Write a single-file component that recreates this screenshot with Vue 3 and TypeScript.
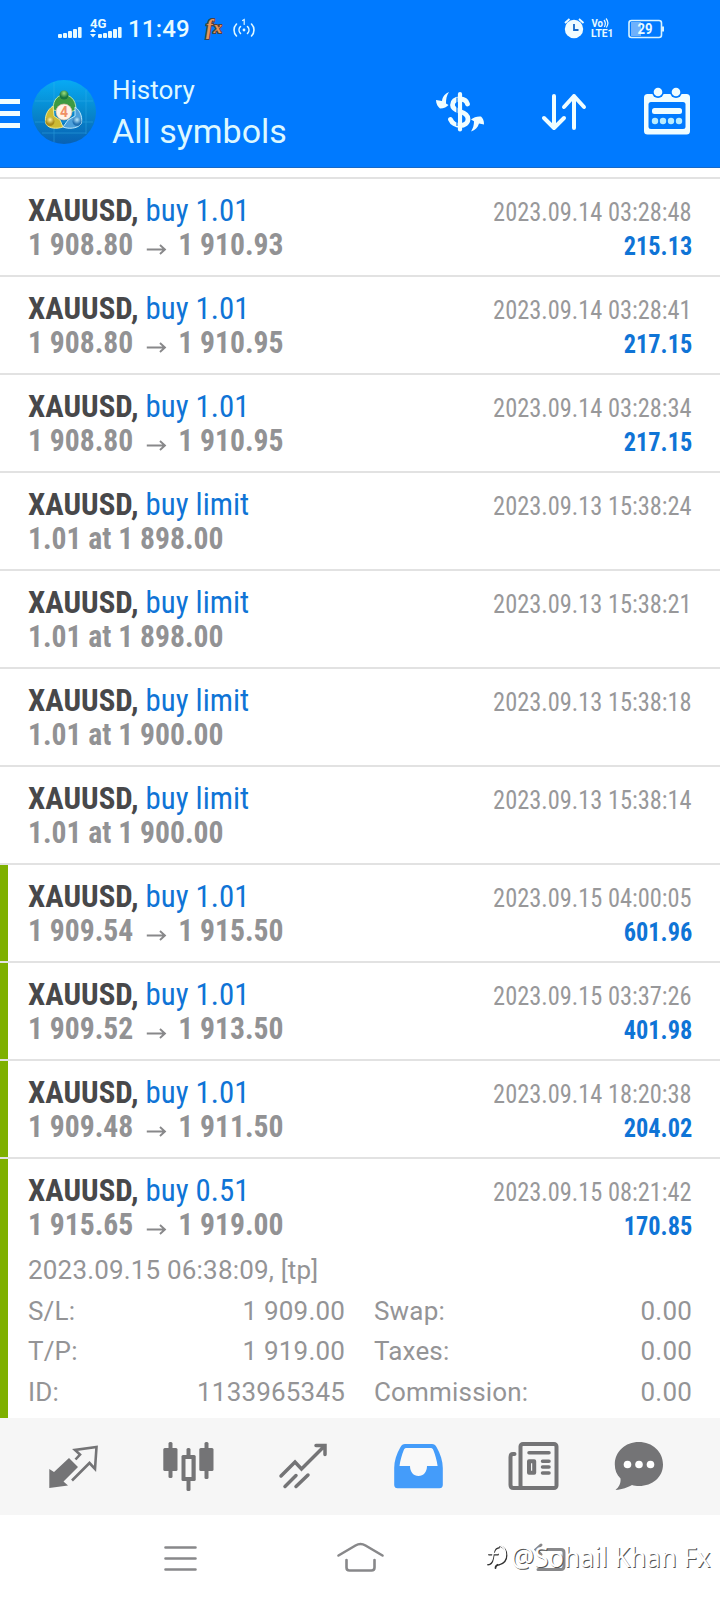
<script setup lang="ts">
interface Deal {
  action: string
  detail: string
  to?: string
  time: string
  profit?: string
  marked?: boolean
  open?: boolean
}

const deals: Deal[] = [
  { action: 'buy 1.01', detail: '1 908.80', to: '1 910.93', time: '2023.09.14 03:28:48', profit: '215.13' },
  { action: 'buy 1.01', detail: '1 908.80', to: '1 910.95', time: '2023.09.14 03:28:41', profit: '217.15' },
  { action: 'buy 1.01', detail: '1 908.80', to: '1 910.95', time: '2023.09.14 03:28:34', profit: '217.15' },
  { action: 'buy limit', detail: '1.01 at 1 898.00', time: '2023.09.13 15:38:24' },
  { action: 'buy limit', detail: '1.01 at 1 898.00', time: '2023.09.13 15:38:21' },
  { action: 'buy limit', detail: '1.01 at 1 900.00', time: '2023.09.13 15:38:18' },
  { action: 'buy limit', detail: '1.01 at 1 900.00', time: '2023.09.13 15:38:14' },
  { action: 'buy 1.01', detail: '1 909.54', to: '1 915.50', time: '2023.09.15 04:00:05', profit: '601.96', marked: true },
  { action: 'buy 1.01', detail: '1 909.52', to: '1 913.50', time: '2023.09.15 03:37:26', profit: '401.98', marked: true },
  { action: 'buy 1.01', detail: '1 909.48', to: '1 911.50', time: '2023.09.14 18:20:38', profit: '204.02', marked: true },
  { action: 'buy 0.51', detail: '1 915.65', to: '1 919.00', time: '2023.09.15 08:21:42', profit: '170.85', marked: true, open: true },
]

const extra = [
  ['S/L:', '1 909.00', 'Swap:', '0.00'],
  ['T/P:', '1 919.00', 'Taxes:', '0.00'],
  ['ID:', '1133965345', 'Commission:', '0.00'],
]
</script>

<template>
  <div class="screen">
    <header class="top">
      <div class="status">
        <svg class="signal" width="68" height="26" viewBox="56 14 68 26">
          <g fill="#e8fbff">
            <rect x="58" y="34" width="4" height="4" rx="1" /><rect x="63" y="33" width="4" height="5" rx="1" />
            <rect x="68" y="31" width="4" height="7" rx="1" /><rect x="73" y="29" width="4" height="9" rx="1" />
            <rect x="78" y="27" width="3.6" height="11" rx="1" />
            <path d="M90 32l3-3.6 3 3.6zM90 34l3 3.6 3-3.6z" />
            <rect x="98" y="34" width="4" height="4" rx="1" /><rect x="103" y="33" width="4" height="5" rx="1" />
            <rect x="108" y="31" width="4" height="7" rx="1" /><rect x="113" y="29" width="4" height="9" rx="1" />
            <rect x="118" y="27" width="3.6" height="11" rx="1" />
          </g>
          <text x="90" y="27.5" class="net" textLength="16.5" lengthAdjust="spacingAndGlyphs">4G</text>
        </svg>
        <span class="clock">11:49</span>
        <svg class="fx" width="22" height="24" viewBox="203 16 22 24">
          <text x="206" y="34" class="fxt">f</text><text x="213.500" y="33" class="fxt fxx">x</text>
        </svg>
        <svg class="hotspot" width="24" height="24" viewBox="232 16 24 24" fill="none" stroke="#e0f8ff" stroke-width="1.6" stroke-linecap="round">
          <path d="M236.500 24a8.500 8.500 0 0 0 0 12M240.500 26.500a5 5 0 0 0 0 7M251.500 24a8.500 8.500 0 0 1 0 12M247.500 26.500a5 5 0 0 1 0 7" />
          <circle cx="244" cy="30" r="1.4" fill="#e0f8ff" stroke="none" /><path d="M242.600 20.500l1.600-1v5" stroke-width="1.2" />
        </svg>
        <svg class="right-status" width="102" height="26" viewBox="563 14 102 26">
          <circle cx="574" cy="29" r="9.2" fill="#f0fcff" />
          <path d="M565 23l4.500-4M579 19l4.500 4" stroke="#f0fcff" stroke-width="1.8" />
          <path d="M574 24v6h4.500" fill="none" stroke="#1769c8" stroke-width="1.8" />
          <text x="591.500" y="27" class="vo" textLength="11.500" lengthAdjust="spacingAndGlyphs">Vo</text>
          <path d="M604 20q2.500 3 .4 7M606 18.500q3.500 4 .4 9" fill="none" stroke="#e8fbff" stroke-width="1.2" />
          <text x="591" y="37" class="vo" textLength="22.500" lengthAdjust="spacingAndGlyphs">LTE1</text>
          <rect x="631" y="22" width="10" height="14" fill="#6fb1fb" />
          <rect x="629" y="20.500" width="32.500" height="17" rx="2.500" fill="none" stroke="#d8f3ff" stroke-width="1.6" />
          <path d="M663 26.500v5" stroke="#d8f3ff" stroke-width="2" />
          <text x="637.500" y="34" class="pct" textLength="15" lengthAdjust="spacingAndGlyphs">29</text>
        </svg>
      </div>
      <div class="bar">
        <div class="menu"><i /><i /><i /></div>
        <svg class="logo" width="64" height="64" viewBox="0 0 64 64">
          <defs>
            <linearGradient id="disc" x1="0" y1="0" x2="0" y2="1"><stop offset="0" stop-color="#08aaf4" /><stop offset=".5" stop-color="#0788cd" /><stop offset="1" stop-color="#0861b4" /></linearGradient>
            <radialGradient id="gr" cy=".3"><stop offset="0" stop-color="#9ee07a" /><stop offset="1" stop-color="#167542" /></radialGradient>
            <radialGradient id="ye" cy=".3"><stop offset="0" stop-color="#fff6a0" /><stop offset="1" stop-color="#a88a1c" /></radialGradient>
            <radialGradient id="bl" cy=".3"><stop offset="0" stop-color="#b8e8ff" /><stop offset="1" stop-color="#2272b4" /></radialGradient>
          </defs>
          <circle cx="32" cy="32" r="32" fill="url(#disc)" />
          <path d="M22 2v60M54 10v44M3 21h58M3 42h58M10 53h44" stroke="#3cb4ec" stroke-width=".8" opacity=".5" />
          <path d="M21 30C21 18 27 15 32 15s12 3 12 15l-6 2-6-7-5 6z" fill="#3d9a42" stroke="#c4ecaa" stroke-width=".9" />
          <path d="M21 26c-6 4-9 11-7 18 3 5 11 5 17 3l-3-7-6-4z" fill="#cdbb35" stroke="#f4ee9b" stroke-width=".9" />
          <path d="M43 27c6 4 8 12 6 17-4 5-13 5-18 3l5-7 7-4z" fill="#4da0da" stroke="#c9efff" stroke-width=".9" />
          <circle cx="32" cy="15" r="4.500" fill="url(#gr)" />
          <circle cx="18" cy="41.500" r="4.500" fill="url(#ye)" /><circle cx="45" cy="41.500" r="4.500" fill="url(#bl)" />
          <circle cx="32" cy="32" r="8" fill="#fff3e8" stroke="#d9b89b" stroke-width=".7" />
          <text x="32" y="37" text-anchor="middle" class="four">4</text>
        </svg>
        <div class="titles"><span class="t1">History</span><span class="t2">All symbols</span></div>
        <svg class="act dollar" width="50" height="44" viewBox="435 90 50 44">
          <g fill="none" stroke="#f0fdff" stroke-linecap="round">
            <path d="M460 94v35.500" stroke-width="4.200" />
            <path d="M467.500 104C466.500 100.500 463.500 99 460 99c-5 0-7.500 2.500-7.500 6s3 5 7.500 6.500c5 1.500 8 3.500 8 7.500s-3.500 6.500-8 6.500c-4 0-8-2.500-9.500-6" stroke-width="4.800" />
          </g>
          <path d="M457 97.500v28.500" stroke="#007aff" stroke-width="1.200" />
          <path d="M449 92c-4 1.500-6.500 5-7 9l-6-1c0 4 2 7 4 8.500 4-.2 7-1.500 8.500-3.500l-2.500-1.500c0-4 .5-8 3-11.500z" fill="#f0fdff" />
          <path d="M471 131.500c4-1.500 7-4 8-8l5 1c0-4-1-6-3-8-4-.3-7 .5-10 3l3 1.800c0 4-1 7-3 10.200z" fill="#f0fdff" />
        </svg>
        <svg class="act sort" width="50" height="44" viewBox="539 90 50 44" fill="none" stroke="#f0fdff" stroke-width="4" stroke-linecap="round" stroke-linejoin="round">
          <path d="M554 96v32M544 118l10 10 10-10M574 128V96M564 107l10-11 10 11" />
        </svg>
        <svg class="act cal" width="50" height="50" viewBox="642 86 50 50">
          <rect x="644" y="94" width="46" height="40.500" rx="3.500" fill="#f0fdff" />
          <rect x="648.500" y="102" width="37" height="27" rx="2.500" fill="#007aff" />
          <circle cx="658" cy="92" r="6" fill="#007aff" /><circle cx="676" cy="92" r="6" fill="#007aff" />
          <circle cx="658" cy="92" r="4.300" fill="#f0fdff" /><circle cx="676" cy="92" r="4.300" fill="#f0fdff" />
          <rect x="652" y="108" width="30" height="6" rx="2.500" fill="#f0fdff" />
          <g fill="#b8ecff"><circle cx="655" cy="121" r="3.200" /><circle cx="663" cy="121" r="3.200" /><circle cx="671" cy="121" r="3.200" /><circle cx="679" cy="121" r="3.200" /></g>
        </svg>
      </div>
    </header>

    <main class="list">
      <article v-for="(d, i) in deals" :key="i" class="deal" :class="{ marked: d.marked, open: d.open }">
        <div class="line">
          <div class="cond left"><b>XAUUSD,</b> <span class="action">{{ d.action }}</span></div>
          <div class="cond right time">{{ d.time }}</div>
        </div>
        <div class="line">
          <div class="cond left price">
            <span>{{ d.detail }}</span>
            <template v-if="d.to">
              <svg class="arrow" width="21.500" height="12" viewBox="0 0 20 12" preserveAspectRatio="none" fill="none" stroke="#88888a" stroke-width="1.900"><path d="M0 6.500h18.500M13.500 2L18.500 6.500l-5 4.500" /></svg>
              <span>{{ d.to }}</span>
            </template>
          </div>
          <div v-if="d.profit" class="cond right profit">{{ d.profit }}</div>
        </div>
        <div v-if="d.open" class="extra">
          <div class="closed">2023.09.15 06:38:09, [tp]</div>
          <div v-for="row in extra" :key="row[0]" class="pair">
            <span>{{ row[0] }}</span><span class="num">{{ row[1] }}</span>
            <span class="second">{{ row[2] }}</span><span class="num">{{ row[3] }}</span>
          </div>
        </div>
      </article>
    </main>

    <nav class="tabs">
      <svg width="52" height="52" viewBox="47 1440 52 52">
        <path d="M49.300 1469l4.700 3 15-14 9 9-14.500 14.500 4.500 4-18.700 2.500z" fill="#747476" />
        <path d="M75.500 1459.500l4.500-5-5-4.500 21.500-3-1.500 22-5.500-6L72 1480.500" fill="none" stroke="#747476" stroke-width="2.600" />
      </svg>
      <svg width="52" height="52" viewBox="162 1440 52 52">
        <g fill="#747476">
          <rect x="163.300" y="1448" width="14.200" height="23" rx="1.500" /><rect x="168.500" y="1442" width="4" height="36" rx="1.500" />
          <rect x="199.300" y="1448" width="14.200" height="23" rx="1.500" /><rect x="204.500" y="1442" width="4" height="37" rx="1.500" />
          <rect x="181.500" y="1455" width="14.200" height="26" rx="1.500" /><rect x="186.500" y="1448" width="4" height="43" rx="1.500" />
        </g>
        <rect x="185.500" y="1459" width="6" height="18" fill="#f6f6f6" />
      </svg>
      <svg width="52" height="52" viewBox="277 1440 52 52" fill="none" stroke="#747476" stroke-width="3.500" stroke-linecap="round">
        <path d="M281 1476l14-14 6.500 7 23-23M316 1445.500h9v9M285 1486.500l11-11M296 1486.500l12-11.500" />
      </svg>
      <svg width="52" height="52" viewBox="392 1440 52 52">
        <path d="M405 1444h27c2 0 3.500 1 4.500 3 4 7 6.300 14 6.300 21v17c0 2-1.300 3.300-3.300 3.300h-42c-2 0-3.300-1.300-3.300-3.300v-17c0-7 2.300-14 6.300-21 1-2 2.500-3 4.500-3z" fill="#449cfa" />
        <path d="M407 1448h23c2 0 2.700.5 3.300 2 2 5 3.500 10 4.300 16H427c0 6-3.500 10-8.500 10s-8.500-4-8.500-10h-10.500c.8-6 2.300-11 4.300-16 .6-1.500 1.300-2 3.200-2z" fill="#f9f9f9" />
      </svg>
      <svg width="52" height="52" viewBox="507 1440 52 52" fill="none" stroke="#747476" stroke-width="4" stroke-linecap="round">
        <rect x="520.500" y="1444" width="36" height="44" rx="2.500" />
        <path d="M514.500 1454H513q-2.500 0-2.500 3v28q0 3 3 3h9" />
        <path d="M529 1452.800h20M542.500 1461.200h6.500M542.500 1467h6.500M542.500 1473h6.500" stroke-width="3.500" />
        <rect x="529" y="1461.300" width="5.200" height="11.500" stroke-linejoin="round" />
      </svg>
      <svg class="chat" width="52" height="52" viewBox="613 1440 52 52">
        <path d="M638.800 1442c13.500 0 24.200 9.500 24.200 22.500 0 12.500-10.500 21.500-24 21.500-2.500 0-5-.4-7-1-5 2.500-9 4.500-16.500 5 3.500-3 5.500-6.500 5-11.500-3.800-3.700-5.700-8.500-5.700-14 0-13 10.500-22.500 24-22.500z" fill="#747476" />
        <g fill="#fff"><circle cx="627.500" cy="1464.500" r="3.800" /><circle cx="639" cy="1464.500" r="3.800" /><circle cx="650.500" cy="1464.500" r="3.800" /></g>
      </svg>
    </nav>

    <footer class="system">
      <svg width="34" height="32" viewBox="163 1542 34 32" stroke="#88888a" stroke-width="2.600" stroke-linecap="round"><path d="M165.500 1547.500h30M165.500 1558.500h30M165.500 1569.500h30" /></svg>
      <svg width="50" height="34" viewBox="336 1540 50 34" fill="none" stroke="#88888a" stroke-width="2.600" stroke-linecap="round" stroke-linejoin="round"><path d="M338.500 1555.500l17-10q5-3 10 0l17 10M346.500 1560v7.500q0 3 3 3h22q3 0 3-3V1560" /></svg>
      <svg width="34" height="32" viewBox="533 1542 34 32" fill="none" stroke="#88888a" stroke-width="3" stroke-linecap="round"><path d="M537 1549.500h24q3 0 3 3v13.500q0 3.500-3 3.500h-23M541 1545l-5 4.500 5 5" /></svg>
      <div class="watermark">
        <svg width="26" height="30" viewBox="485 1545 26 30" fill="none" stroke-linecap="round">
          <path d="M500 1549q6.500 2 6.500 9.500 0 7-7 9-4 .500-4 3.500M488 1567.500q4 0 5-6l1-6q1-4.500 5-5M489 1557.500h9" stroke="#333" stroke-width="1.800" />
          <path d="M499 1548q6.500 2 6.500 9.500 0 7-7 9M487.500 1566.500q4 0 5-6l1-6q1-4.500 5-5M488.500 1556.500h9" stroke="#fff" stroke-width="1.500" />
        </svg>
        <span>@Sohail Khan Fx</span>
      </div>
    </footer>
  </div>
</template>

<style>
body { margin: 0; background: #fff; }
</style>

<style scoped>
.screen { width: 720px; height: 1600px; overflow: hidden; background: #fff; font-family: Roboto, "Liberation Sans", sans-serif; display: flex; flex-direction: column; }
svg { display: block; flex: none; }
.top { box-sizing: border-box; height: 168px; background: #007aff; border-bottom: 1px solid #1769c8; flex: none; }
.status { height: 56px; box-sizing: border-box; padding: 0 0 0 56px; display: flex; align-items: flex-start; }
.signal { margin-top: 14px; }
.clock { flex: none; width: 62px; margin: 13px 0 0 4px; font-size: 24px; line-height: 32px; font-weight: 500; letter-spacing: .2px; color: #e8fbff; white-space: nowrap; }
.fx { margin: 16px 0 0 13px; }
.hotspot { margin: 16px 0 0 7px; }
.right-status { margin: 14px 0 0 307px; }
.net { font: 700 12.500px Roboto, sans-serif; fill: #e8fbff; }
.vo { font: 700 11px Roboto, sans-serif; fill: #e8fbff; }
.pct { font: 700 14px Roboto, sans-serif; fill: #e8fbff; }
.fxt { font: italic 700 20px "Liberation Serif", serif; fill: #e8965a; stroke: #4b4140; stroke-width: 2.200px; paint-order: stroke; }
.fxx { font-size: 17px; }
.bar { height: 111px; display: flex; align-items: flex-start; }
.menu { width: 20px; margin-top: 43px; display: flex; flex-direction: column; gap: 7px; }
.menu i { display: block; height: 5px; background: #f0fdff; }
.logo { margin: 24px 0 0 12px; }
.four { font: 700 14px Roboto, sans-serif; fill: #ef9066; }
.titles { width: 200px; margin: 18px 0 0 16px; display: flex; flex-direction: column; color: #ddf8ff; white-space: nowrap; }
.t1 { font-size: 26px; line-height: 32px; margin-top: 0; }
.t2 { font-size: 34px; line-height: 40px; margin-top: 5px; }
.dollar { margin: 34px 0 0 123px; }
.sort { margin: 34px 0 0 54px; }
.cal { margin: 30px 0 0 53px; }

.list { height: 1241px; margin-top: 9px; flex: none; }
.deal { box-sizing: border-box; height: 98px; border-top: 2px solid #e2e2e2; padding: 14px 28px 0; position: relative; }
.deal.open { height: 261px; }
.marked::before { content: ""; position: absolute; left: 0; top: 0; bottom: 0; width: 8px; background: #7eb000; }
.line { display: flex; justify-content: space-between; align-items: baseline; height: 34px; line-height: 34px; }
.cond { white-space: nowrap; font-family: "Roboto Condensed", Roboto, sans-serif; font-stretch: 75%; }
.left { font-size: 32px; color: #48484a; transform: scaleX(.964); transform-origin: left; }
.right { font-size: 26px; transform-origin: right; }
.action { color: #0f74d6; }
.price { color: #929294; font-weight: 700; transform: scaleX(.926); }
.arrow { display: inline-block; margin: 0 12.500px 0 14.500px; }
.time { color: #98989a; transform: scaleX(.938); }
.profit { color: #0f74d6; font-weight: 700; transform: scaleX(.935); }
.extra { margin-top: 9px; font-size: 26px; line-height: 40.500px; letter-spacing: .18px; color: #949496; }
.pair { display: grid; grid-template-columns: 120px 197px 180px 1fr; }
.num { text-align: right; }
.second { padding-left: 29px; }

.tabs { height: 97px; flex: none; box-sizing: border-box; padding: 22px 0 0 47px; background: #f6f6f6; display: flex; gap: 63px; }
.chat { margin-left: -9px; }
.system { height: 85px; display: flex; position: relative; padding: 27px 0 0 163px; box-sizing: border-box; }
.system > svg:nth-child(2) { margin: -2px 0 0 139px; }
.system > svg:nth-child(3) { margin-left: 147px; }
.watermark { position: absolute; left: 485px; top: 24px; display: flex; align-items: center; color: #fff; font-family: "Noto Sans", sans-serif; font-size: 27px; line-height: 36px; white-space: nowrap; text-shadow: 1px 1px 0 #555; }
.watermark span { transform: scaleX(.955); transform-origin: left; }
</style>
